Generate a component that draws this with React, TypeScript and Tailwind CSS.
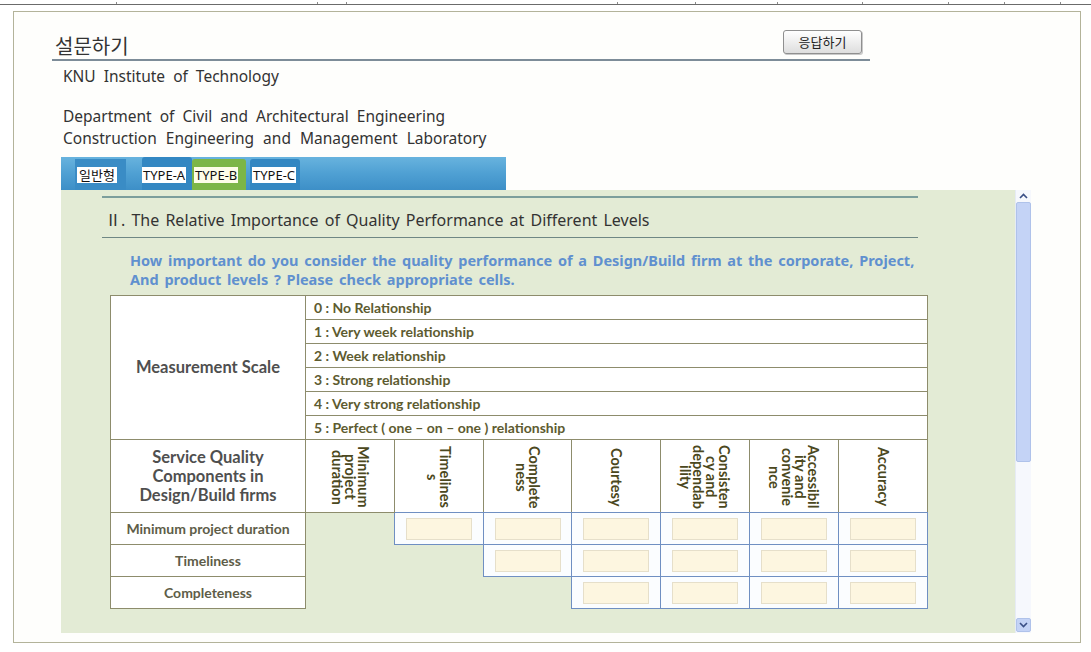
import React from 'react';

const scale = [
  '0 : No Relationship',
  '1 : Very week relationship',
  '2 : Week relationship',
  '3 : Strong relationship',
  '4 : Very strong relationship',
  '5 : Perfect ( one – on – one ) relationship',
];

const headers = [
  ['Minimum', 'project', 'duration'],
  ['Timelines', 's'],
  ['Complete', 'ness'],
  ['Courtesy'],
  ['Consisten', 'cy and', 'dependab', 'ility'],
  ['Accessibil', 'ity and', 'convenie', 'nce'],
  ['Accuracy'],
];

const rows = ['Minimum project duration', 'Timeliness', 'Completeness'];

const ticks = [116, 200, 28, 270, 77, 81, 84, 85, 55, 55];

const Chevron = ({ up }: { up?: boolean }) => (
  <svg width="9" height="6" viewBox="0 0 9 6">
    <path
      d={up ? 'M1 5 L4.5 1.5 L8 5' : 'M1 1 L4.5 4.5 L8 1'}
      fill="none"
      stroke="#3a4f86"
      strokeWidth="1.6"
    />
  </svg>
);

const App: React.FC = () => {
  return (
    <div className="w-[1091px] h-[652px] bg-white overflow-hidden font-['Noto_Sans','Noto_Sans_CJK_KR',sans-serif] text-[#333]">
      {/* ruler line on top */}
      <div className="flex items-end h-[5px] border-b border-[#6b6b6b]">
        {ticks.map((t, i) => (
          <div key={i} className="flex" style={{ marginLeft: t }}>
            <div className="w-px h-[2px] bg-[#8a8a8a]" />
          </div>
        ))}
      </div>

      <div className="ml-[13px] mt-[6px] w-[1068px] h-[632px] border border-[#b3b39a] bg-[#fefefc] flex flex-col">
        {/* title */}
        <div className="ml-[38px] mt-[16px] w-[818px] h-[33px] border-b-2 border-[#7d8c98] flex items-center justify-between">
          <span className="pl-[3px] pt-[4px] text-[20px] leading-[24px] text-[#333] font-['Noto_Sans_CJK_KR',sans-serif]">
            설문하기
          </span>
          <button className="mr-[8px] mt-[-4px] w-[79px] h-[24px] rounded-[3px] border border-[#8f8f8f] bg-gradient-to-b from-white to-[#dedede] text-[13px] leading-[20px] text-[#222] font-['Noto_Sans_CJK_KR',sans-serif] shadow-[1px_1px_0_#c9c9c9]">
            응답하기
          </button>
        </div>

        <div className="ml-[49px] mt-[5px] text-[15.5px] leading-[20px] text-[#333] [word-spacing:4px]">
          KNU Institute of Technology
        </div>
        <div className="ml-[49px] mt-[19px] text-[15.5px] leading-[22px] text-[#333] [word-spacing:4px]">
          <div>Department of Civil and Architectural Engineering</div>
          <div className="[word-spacing:5px]">Construction Engineering and Management Laboratory</div>
        </div>

        {/* tabs */}
        <div className="ml-[47px] mt-[8px] w-[445px] h-[33px] bg-gradient-to-b from-[#68b3de] via-[#4fa0d3] to-[#3d8fc7] flex items-end text-[13px] leading-[16px] font-['Noto_Sans','Noto_Sans_CJK_KR',sans-serif]">
          <div className="ml-[14px] w-[51px] h-[31px] bg-[#3a8cc5] flex items-center pl-[2px]">
            <span className="bg-white px-[2px] text-[#111]">일반형</span>
          </div>
          <div className="ml-[16px] w-[50px] h-[33px] bg-[#3387c2] rounded-t-[3px] flex items-center pt-[2px]">
            <span className="bg-white px-[1px] text-[#111]">TYPE-A</span>
          </div>
          <div className="w-[54px] h-[31px] bg-[#7cb647] rounded-t-[3px] flex items-center pl-[2px]">
            <span className="bg-[#fdfde8] px-[1px] text-[#111]">TYPE-B</span>
          </div>
          <div className="ml-[4px] w-[50px] h-[31px] bg-[#3387c2] rounded-t-[3px] flex items-center pl-[2px]">
            <span className="bg-white px-[1px] text-[#111]">TYPE-C</span>
          </div>
        </div>

        {/* panel + scrollbar */}
        <div className="ml-[47px] flex">
          <div className="w-[954px] h-[443px] bg-[#e3ebd5] flex flex-col">
            <div className="ml-[41px] mt-[6px] w-[816px] border-t-2 border-[#7c9e9c]" />
            <div className="ml-[41px] w-[816px] h-[40px] border-b border-[#6f8784] flex items-center pl-[3px] pt-[5px] text-[16px] text-[#333] [word-spacing:2px]">
              Ⅱ. The Relative Importance of Quality Performance at Different Levels
            </div>
            <div className="ml-[69px] mt-[13px] text-[14.5px] leading-[19px] font-bold text-[#6090cf] [word-spacing:2px]">
              <div>How important do you consider the quality performance of a Design/Build firm at the corporate, Project,</div>
              <div>And product levels ? Please check appropriate cells.</div>
            </div>

            <table className="ml-[49px] mt-[6px] w-[817px] table-fixed border-collapse font-['Lato','Noto_Sans',sans-serif]">
              <colgroup>
                <col className="w-[195px]" />
                <col className="w-[89px]" />
                <col className="w-[89px]" />
                <col className="w-[88px]" />
                <col className="w-[89px]" />
                <col className="w-[89px]" />
                <col className="w-[89px]" />
                <col className="w-[89px]" />
              </colgroup>
              <tbody>
                {scale.map((s, i) => (
                  <tr key={s}>
                    {i === 0 && (
                      <td
                        rowSpan={6}
                        className="border border-[#8d8c6c] bg-white text-center text-[16.5px] font-bold text-[#4f4f4f]"
                      >
                        Measurement Scale
                      </td>
                    )}
                    <td
                      colSpan={7}
                      className="h-[24px] border border-[#8d8c6c] bg-white px-[8px] text-[14px] font-bold text-[#5d5b30] leading-[16px]"
                    >
                      {s}
                    </td>
                  </tr>
                ))}
                <tr>
                  <td className="h-[73px] border border-[#8d8c6c] bg-white text-center text-[16.5px] leading-[19px] font-bold text-[#4f4f4f]">
                    Service Quality
                    <br />
                    Components in
                    <br />
                    Design/Build firms
                  </td>
                  {headers.map((h, i) => (
                    <td
                      key={i}
                      className={`h-[73px] border border-[#8d8c6c] bg-white align-top pt-[4px] ${
                        i === 0 ? '' : 'border-b-[#6f8fc2]'
                      }`}
                    >
                      <div className="flex justify-center">
                        <div className="h-[66px] [writing-mode:vertical-rl] text-center whitespace-nowrap text-[14.5px] leading-[13px] font-bold text-[#4b4820]">
                          {h.map((l, k) => (
                            <React.Fragment key={k}>
                              {k > 0 && <br />}
                              {l}
                            </React.Fragment>
                          ))}
                        </div>
                      </div>
                    </td>
                  ))}
                </tr>
                {rows.map((r, ri) => (
                  <tr key={r}>
                    <td className="h-[32px] border border-[#8d8c6c] bg-white text-center text-[14px] font-bold text-[#5e5d48]">
                      {r}
                    </td>
                    {headers.map((_, ci) =>
                      ci > ri ? (
                        <td key={ci} className="h-[32px] border border-[#6f8fc2] bg-[#fbfdff]">
                          <div className="flex justify-center">
                            <div className="w-[66px] h-[22px] bg-[#fdf6e0] border border-[#e6dfca]" />
                          </div>
                        </td>
                      ) : (
                        <td key={ci} className="h-[32px]" />
                      )
                    )}
                  </tr>
                ))}
              </tbody>
            </table>
          </div>

          {/* scrollbar */}
          <div className="w-[16px] h-[443px] bg-[#f6f8fd] border-l border-[#e6ebf5] flex flex-col">
            <div className="h-[12px] flex items-center justify-center">
              <Chevron up />
            </div>
            <div className="h-[260px] bg-[#c4d3f6] border border-[#afc2ea] rounded-[2px]" />
            <div className="flex-1" />
            <div className="h-[14px] mb-[1px] bg-[#c4d3f6] border border-[#afc2ea] rounded-[2px] flex items-center justify-center">
              <Chevron />
            </div>
          </div>
        </div>
      </div>
    </div>
  );
};

export default App;
